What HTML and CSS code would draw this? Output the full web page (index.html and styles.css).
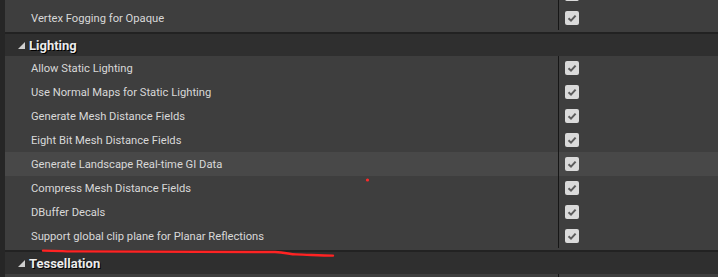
FILE: index.html
```html
<!DOCTYPE html>
<html lang="en">
<head>
    <meta charset="UTF-8">
    <title>Project Settings - Rendering</title>
    <link rel="stylesheet" href="styles.css">
</head>
<body>
    <div class="panel">
        <div class="group">
            <div class="row">
                <div class="name"></div>
                <div class="value"><span class="check"><svg viewBox="0 0 14 14"><path d="M3.5 7.2 L6 9.6 L10.6 4.6"/></svg></span></div>
            </div>
            <div class="row">
                <div class="name">Vertex Fogging for Opaque</div>
                <div class="value"><span class="check"><svg viewBox="0 0 14 14"><path d="M3.5 7.2 L6 9.6 L10.6 4.6"/></svg></span></div>
            </div>
        </div>

        <div class="cat"><span class="arrow"></span>Lighting</div>
        <div class="group">
            <div class="row">
                <div class="name">Allow Static Lighting</div>
                <div class="value"><span class="check"><svg viewBox="0 0 14 14"><path d="M3.5 7.2 L6 9.6 L10.6 4.6"/></svg></span></div>
            </div>
            <div class="row">
                <div class="name">Use Normal Maps for Static Lighting</div>
                <div class="value"><span class="check"><svg viewBox="0 0 14 14"><path d="M3.5 7.2 L6 9.6 L10.6 4.6"/></svg></span></div>
            </div>
            <div class="row">
                <div class="name">Generate Mesh Distance Fields</div>
                <div class="value"><span class="check"><svg viewBox="0 0 14 14"><path d="M3.5 7.2 L6 9.6 L10.6 4.6"/></svg></span></div>
            </div>
            <div class="row">
                <div class="name">Eight Bit Mesh Distance Fields</div>
                <div class="value"><span class="check"><svg viewBox="0 0 14 14"><path d="M3.5 7.2 L6 9.6 L10.6 4.6"/></svg></span></div>
            </div>
            <div class="row hover">
                <div class="name">Generate Landscape Real-time GI Data</div>
                <div class="value"><span class="check"><svg viewBox="0 0 14 14"><path d="M3.5 7.2 L6 9.6 L10.6 4.6"/></svg></span></div>
            </div>
            <div class="row">
                <div class="name">Compress Mesh Distance Fields</div>
                <div class="value"><span class="check"><svg viewBox="0 0 14 14"><path d="M3.5 7.2 L6 9.6 L10.6 4.6"/></svg></span></div>
            </div>
            <div class="row">
                <div class="name">DBuffer Decals</div>
                <div class="value"><span class="check"><svg viewBox="0 0 14 14"><path d="M3.5 7.2 L6 9.6 L10.6 4.6"/></svg></span></div>
            </div>
            <div class="row">
                <div class="name">Support global clip plane for Planar Reflections</div>
                <div class="value"><span class="check"><svg viewBox="0 0 14 14"><path d="M3.5 7.2 L6 9.6 L10.6 4.6"/></svg></span></div>
            </div>
        </div>

        <div class="cat"><span class="arrow"></span>Tessellation</div>
        <div class="group">
            <div class="row">
                <div class="name"></div>
                <div class="value"></div>
            </div>
        </div>
    </div>

    <!-- red marker scribbles drawn over the screenshot -->
    <svg class="marks" viewBox="0 0 718 277">
        <circle cx="367.5" cy="180" r="1.6" fill="#ff2a2a"/>
        <path d="M43 250.6 C60 250.8 70 251.6 80 251.4 C150 251.4 220 251.6 275 252 C285 252.4 290 254.2 296 254.4 C310 254.8 322 255.6 333 255.6" fill="none" stroke="#ff2323" stroke-width="2.4" stroke-linecap="round"/>
    </svg>
</body>
</html>
```

FILE: styles.css
```css
body {
    margin: 0;
    padding: 0;
    background: #262626;
    font-family: Roboto, "Liberation Sans", Arial, sans-serif;
    font-size: 11.2px;
    color: #d8d8d8;
    overflow: hidden;
    height: 277px;
}

.panel {
    margin-left: 5px;
    margin-top: -18px;
    background: #3e3e3e;
}

.group {
    padding-bottom: 2px;
    border-bottom: 2px solid #222;
}

.row {
    display: grid;
    grid-template-columns: 553px 1fr;
    height: 24px;
}

.row.hover {
    background: #484848;
}

.name {
    display: flex;
    align-items: center;
    padding-left: 26px;
    white-space: nowrap;
}

.value {
    display: flex;
    align-items: center;
    padding-left: 6px;
    border-left: 1px solid #161616;
}

.check {
    display: block;
    width: 14px;
    height: 14px;
    background: #dadada;
    border-radius: 2px;
}

.check svg {
    display: block;
    width: 14px;
    height: 14px;
}

.check path {
    fill: none;
    stroke: #5c5c5c;
    stroke-width: 2;
}

.cat {
    display: flex;
    align-items: center;
    height: 22px;
    background: #2f2f2f;
    padding-left: 13px;
    font-size: 13px;
    font-weight: bold;
    color: #ececec;
    text-shadow: 1px 1px 0 #000;
}

.arrow {
    width: 0;
    height: 0;
    border-left: 7px solid transparent;
    border-bottom: 7px solid #cfcfcf;
    margin-right: 4px;
    margin-top: 1px;
}

.marks {
    position: absolute;
    left: 0;
    top: 0;
    width: 718px;
    height: 277px;
    pointer-events: none;
}
```
